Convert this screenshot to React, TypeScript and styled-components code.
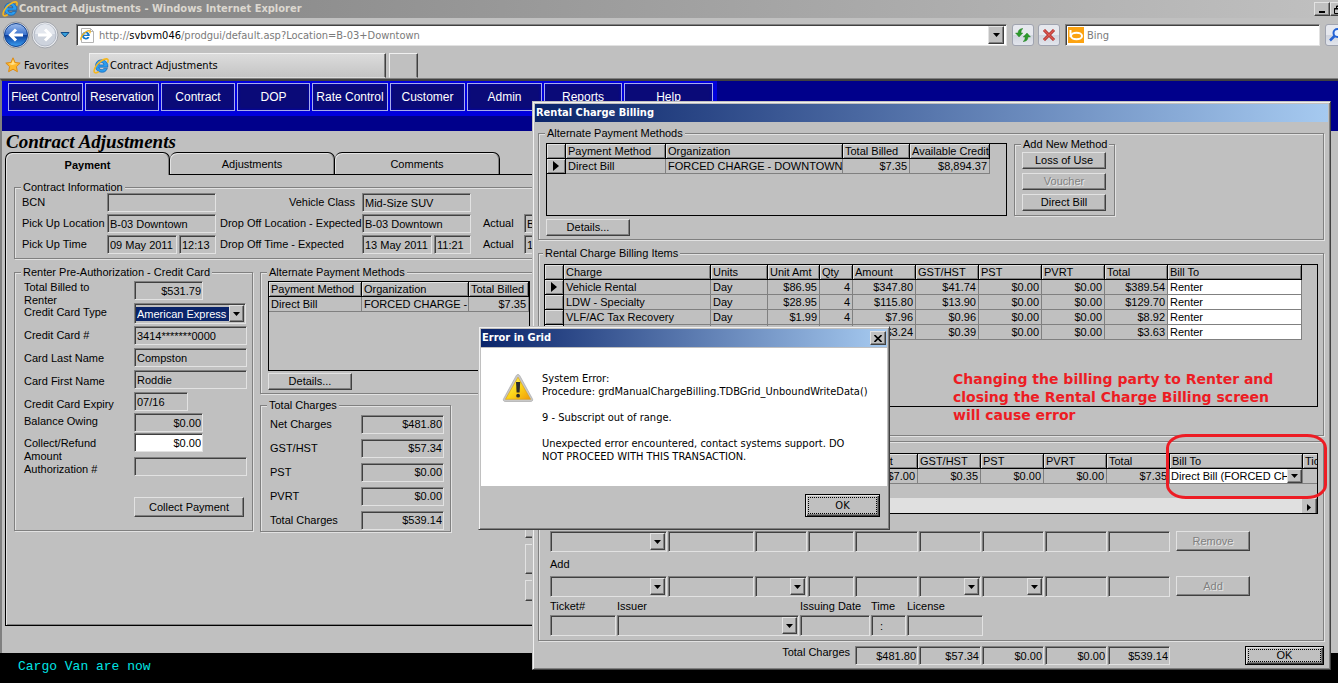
import React from "react";
import styled, { createGlobalStyle, css } from "styled-components";

const FACE = "#c0c0c0";
const LIGHT = "#e2e2e2";
const SHADOW = "#808080";
const DARK = "#404040";
const NAVY = "#00008b";
const SANS = '"Liberation Sans", Arial, sans-serif';
const UI = '"DejaVu Sans Condensed", Tahoma, sans-serif';

const GlobalStyle = createGlobalStyle`
  *, *::before, *::after { box-sizing: border-box; }
  body { margin: 0; background: ${FACE}; }
  button, input, select { font: inherit; color: inherit; margin: 0; border-radius: 0; }
`;

const raised = css`
  background: ${FACE};
  border: 1px solid;
  border-color: ${LIGHT} ${DARK} ${DARK} ${LIGHT};
  box-shadow: inset -1px -1px 0 ${SHADOW};
`;

const sunken = css`
  border: 1px solid;
  border-color: ${SHADOW} ${LIGHT} ${LIGHT} ${SHADOW};
  box-shadow: inset 1px 1px 0 ${DARK};
`;

/* ---------- shell ---------- */

const Screen = styled.div`
  position: relative;
  display: flex;
  flex-direction: column;
  min-height: 100vh;
  overflow: hidden;
  background: ${FACE};
  color: #000;
  font: 11px/13px ${SANS};
`;

const TitleBar = styled.header`
  display: flex;
  align-items: center;
  height: 18px;
  padding-left: 2px;
  gap: 1px;
  background: linear-gradient(90deg, #808080, #c0c0c0);
  color: #dcd8d0;
  font: bold 11px/18px ${UI};
  overflow: hidden;
`;

const TitleText = styled.span`
  flex: 1;
  white-space: nowrap;
`;

const CaptionButton = styled.button`
  ${raised}
  flex: none;
  display: flex;
  align-items: center;
  justify-content: center;
  width: 16px;
  height: 14px;
  padding: 0;
`;

const CaptionGroup = styled.div`
  display: flex;
  flex: none;
  width: 24px;
  overflow: hidden;
`;

const NavBar = styled.div`
  display: flex;
  align-items: center;
  height: 34px;
  padding-left: 3px;
  font-family: ${UI};
  overflow: hidden;
`;

const RoundButtons = styled.div`
  display: flex;
  flex: none;
  align-items: center;
  width: 73px;
`;

const RoundButton = styled.button`
  display: flex;
  flex: none;
  padding: 0;
  border: 0;
  background: none;
`;

const AddressBox = styled.div`
  ${sunken}
  display: flex;
  flex: 1;
  align-items: center;
  min-width: 0;
  height: 22px;
  padding: 1px 2px 1px 3px;
  gap: 4px;
  background: #fff;
`;

const AddressText = styled.a`
  flex: 1;
  color: #7a7a7a;
  text-decoration: none;
  white-space: nowrap;
  b { color: #000; font-weight: normal; }
`;

const ArrowButton = styled.button`
  ${raised}
  display: flex;
  flex: none;
  align-items: center;
  justify-content: center;
  width: 16px;
  height: 18px;
  padding: 0;
`;

const ToolButton = styled.button<{ $gap: number }>`
  display: flex;
  flex: none;
  align-items: center;
  justify-content: center;
  width: 22px;
  height: 22px;
  margin-left: ${(p) => p.$gap}px;
  padding: 0;
  border: 1px solid #a0a4b0;
  border-radius: 3px;
  background: linear-gradient(#e6e8ee 50%, #d0d4de 50%, #e2e5ec);
`;

const SearchBox = styled.label`
  ${sunken}
  display: flex;
  flex: none;
  align-items: center;
  width: 255px;
  height: 22px;
  margin-left: 5px;
  padding: 1px 2px;
  gap: 3px;
  background: #fff;
`;

const SearchInput = styled.input`
  flex: 1;
  min-width: 0;
  padding: 0;
  border: 0;
  outline: 0;
  background: none;
  &::placeholder { color: #7a7a7a; opacity: 1; }
`;

const SearchSlot = styled.div`
  flex: none;
  width: 18px;
  overflow: hidden;
`;

const TabBar = styled.div`
  display: flex;
  align-items: flex-end;
  height: 27px;
  border-bottom: 1px solid ${SHADOW};
  padding-left: 5px;
  font-family: ${UI};
`;

const Favorites = styled.button`
  display: flex;
  align-items: center;
  align-self: flex-start;
  width: 84px;
  height: 26px;
  padding: 0;
  gap: 3px;
  border: 0;
  background: none;
`;

const BrowserTab = styled.div<{ $width: number }>`
  display: flex;
  align-items: center;
  width: ${(p) => p.$width}px;
  height: 25px;
  margin-right: 3px;
  padding-left: 3px;
  gap: 1px;
  border: 1px solid;
  border-color: #f0f0f0 ${DARK} transparent #f0f0f0;
  box-shadow: inset -1px 0 0 ${SHADOW};
  background: ${(p) => (p.$width > 50 ? "linear-gradient(#dcdcdc, #c4c4c4)" : FACE)};
`;

/* ---------- page ---------- */

const Page = styled.main`
  display: flex;
  flex: 1;
  flex-direction: column;
  border: solid ${DARK};
  border-width: 2px 0 0 2px;
  border-left-color: ${SHADOW};
`;

const MenuBand = styled.nav`
  height: 50px;
  background: ${NAVY};
`;

const Menu = styled.div`
  display: inline-flex;
  height: 35px;
  padding: 2px 4px 5px 6px;
  gap: 2px;
  background: #0000dc;
  vertical-align: top;
`;

const MenuItem = styled.button<{ $width: number }>`
  width: ${(p) => p.$width}px;
  height: 28px;
  padding: 0;
  border: 1px solid #a9aeea;
  background: #0a0a78;
  color: #fff;
  font-size: 12px;
  white-space: nowrap;
  box-shadow: inset 0 0 3px #0000c0;
`;

const Heading = styled.h1`
  margin: 0;
  padding-left: 4px;
  font: italic bold 19px/21px "Liberation Serif", "Times New Roman", serif;
`;

const Tabs = styled.div`
  display: flex;
  height: 23px;
  margin: 0 20px 0 3px;
`;

const PageTab = styled.button<{ $active?: boolean }>`
  width: 165px;
  padding: 2px 0 0;
  border: solid #000;
  border-width: 1px 1px ${(p) => (p.$active ? 0 : 1)}px ${(p) => (p.$active ? 1 : 0)}px;
  border-radius: 7px 7px 0 0;
  background: ${FACE};
  box-shadow: inset 1px 1px 0 ${LIGHT}, inset -1px 0 0 ${SHADOW};
  font-weight: ${(p) => (p.$active ? "bold" : "normal")};
`;

const TabFill = styled.div`
  flex: 1;
  border-bottom: 1px solid #000;
`;

const Pane = styled.section`
  display: flex;
  flex: 1;
  flex-direction: column;
  margin: 0 20px 27px 3px;
  padding: 7px 0 0 8px;
  gap: 8px;
  border: solid #000;
  border-width: 0 0 1px 1px;
  box-shadow: inset 1px 0 0 ${LIGHT}, inset 0 -1px 0 ${SHADOW};
`;

const Columns = styled.div<{ $gap?: number }>`
  display: flex;
  align-items: flex-start;
  gap: ${(p) => p.$gap ?? 0}px;
`;

const Stack = styled.div<{ $gap?: number; $top?: number; $left?: number }>`
  display: flex;
  flex-direction: column;
  gap: ${(p) => p.$gap ?? 0}px;
  padding-top: ${(p) => p.$top ?? 0}px;
  margin-left: ${(p) => p.$left ?? 0}px;
`;

const Group = styled.fieldset<{ $pad: string; $width?: number }>`
  flex: none;
  width: ${(p) => (p.$width ? p.$width + "px" : "auto")};
  min-width: 0;
  margin: 0;
  padding: ${(p) => p.$pad};
  border: 1px solid ${SHADOW};
  box-shadow: inset 1px 1px 0 ${LIGHT}, 1px 1px 0 ${LIGHT};
`;

const Legend = styled.legend`
  margin-left: -1px;
  padding: 0 2px;
  background: ${FACE};
  line-height: 11px;
  white-space: nowrap;
`;

const ContractGrid = styled.div`
  display: grid;
  grid-template-columns: 85px 109px 146px 109px 53px 109px;
  row-gap: 2px;
  align-items: center;
  & > :nth-child(6n + 3) { margin-left: 4px; }
  & > :nth-child(6n + 5) { margin-left: 12px; }
`;

const Label = styled.label<{ $end?: boolean }>`
  white-space: nowrap;
  text-align: ${(p) => (p.$end ? "right" : "left")};
  padding-right: ${(p) => (p.$end ? 7 : 0)}px;
`;

const Field = styled.input<{ $w?: number; $right?: boolean; $white?: boolean; $tall?: boolean }>`
  ${sunken}
  width: ${(p) => (p.$w ? p.$w + "px" : "100%")};
  height: ${(p) => (p.$tall ? 21 : 19)}px;
  min-width: 0;
  padding: 0 ${(p) => (p.$right ? 1 : 2)}px;
  background: ${(p) => (p.$white ? "#fff" : FACE)};
  text-align: ${(p) => (p.$right ? "right" : "left")};
`;

const Pair = styled.div`
  display: grid;
  grid-template-columns: 70px 37px;
  gap: 2px;
`;

const Cell = styled.div<{ $h: number }>`
  display: flex;
  align-items: flex-start;
  height: ${(p) => p.$h}px;
`;

const CardLabels = styled.div`
  width: 110px;
  padding-top: 3px;
`;

const CardFields = styled.div`
  padding-top: 3px;
`;

const WrapLabel = styled.label`
  width: 90px;
`;

const PushButton = styled.button<{ $w: number; $h?: number }>`
  ${raised}
  width: ${(p) => p.$w}px;
  height: ${(p) => p.$h ?? 17}px;
  padding: 0;
  line-height: 13px;
  &:disabled {
    color: ${SHADOW};
    text-shadow: 1px 1px 0 #e8e8e8;
  }
`;

const DefaultButton = styled.button<{ $w: number; $h: number }>`
  width: ${(p) => p.$w}px;
  height: ${(p) => p.$h}px;
  padding: 2px;
  border: 1px solid #000;
  background: ${FACE};
  box-shadow: inset 1px 1px 0 ${LIGHT}, inset -1px -1px 0 ${DARK}, inset -2px -2px 0 ${SHADOW};
  span {
    display: flex;
    align-items: center;
    justify-content: center;
    height: 100%;
    border: 1px dotted #000;
  }
`;

const ComboBox = styled.span<{ $w?: number; $h: number; $flat?: boolean }>`
  ${(p) => (p.$flat ? css`background: #fff;` : sunken)}
  display: grid;
  align-items: center;
  width: ${(p) => (p.$w ? p.$w + "px" : "100%")};
  height: ${(p) => p.$h}px;
  padding: ${(p) => (p.$flat ? 0 : 1)}px;
  & > * { grid-area: 1 / 1; }
`;

const ComboSelect = styled.select<{ $selected?: boolean }>`
  appearance: none;
  width: ${(p) => (p.$selected ? "93px" : "100%")};
  height: 14px;
  padding: 0 1px;
  border: 0;
  outline: 0;
  background: ${(p) => (p.$selected ? "#0a246a" : "transparent")};
  color: ${(p) => (p.$selected ? "#fff" : "#000")};
  line-height: 14px;
`;

const ComboArrow = styled.span`
  ${raised}
  display: flex;
  align-items: center;
  justify-content: center;
  justify-self: end;
  width: 15px;
  height: 100%;
  pointer-events: none;
`;

/* ---------- grids ---------- */

const GridBox = styled.div<{ $h: number; $w?: number }>`
  display: flex;
  flex-direction: column;
  width: ${(p) => (p.$w ? p.$w + "px" : "auto")};
  height: ${(p) => p.$h}px;
  border: 1px solid #000;
  overflow: hidden;
`;

const DataTable = styled.table`
  flex: none;
  align-self: flex-start;
  table-layout: fixed;
  width: 0;
  border-collapse: separate;
  border-spacing: 0;
  th, td {
    height: 15px;
    padding: 0 2px;
    overflow: hidden;
    white-space: nowrap;
    line-height: 13px;
    font-weight: normal;
    text-align: left;
  }
  && th { padding-right: 0; }
`;

const Th = styled.th`
  border: solid #000;
  border-width: 0 1px 1px 0;
  box-shadow: inset 1px 1px 0 ${LIGHT}, inset -1px -1px 0 ${SHADOW};
`;

const Td = styled.td<{ $right?: boolean; $white?: boolean }>`
  border: solid ${SHADOW};
  border-width: 0 1px 1px 0;
  background: ${(p) => (p.$white ? "#fff" : FACE)};
  && { text-align: ${(p) => (p.$right ? "right" : "left")}; }
  &&:has(span) { padding: 0; }
`;

const Selector = styled(Th)`
  && { padding: 0 0 0 6px; }
  svg { display: block; }
`;

const ScrollBar = styled.div`
  display: flex;
  justify-content: flex-end;
  height: 15px;
  margin-top: auto;
  background: #e0e0e0;
`;

/* ---------- windows ---------- */

const windowFrame = css`
  position: absolute;
  padding: 2px;
  background: ${FACE};
  border: 1px solid;
  border-color: ${FACE} ${DARK} ${DARK} ${FACE};
  box-shadow: inset 1px 1px 0 #f0f0f0, inset -1px -1px 0 ${SHADOW};
`;

const BillingWindow = styled.section`
  ${windowFrame}
  top: 101px;
  left: 532px;
  right: 7px;
`;

const ErrorWindow = styled.section`
  ${windowFrame}
  top: 326px;
  left: 478px;
  width: 412px;
`;

const WindowTitle = styled.h2`
  display: flex;
  align-items: center;
  justify-content: space-between;
  height: 18px;
  margin: 0;
  padding: 0 1px 0 1px;
  background: linear-gradient(90deg, #0a246a, #a6caf0);
  color: #fff;
  font: bold 11px/18px ${UI};
`;

const BillingBody = styled.div`
  display: flex;
  flex-direction: column;
  padding: 6px 4px 2px 3px;
`;

const BelowGroup = styled.div<{ $gap: number }>`
  padding-top: ${(p) => p.$gap}px;
`;

const EntryRow = styled.div`
  display: grid;
  grid-template-columns: 117px 86px 52px 46px 63px 62px 62px 62px 62px 78px;
  column-gap: 1px;
  padding-left: 6px;
  button { margin-left: 5px; }
`;

const TicketGrid = styled.div`
  display: grid;
  grid-template-columns: 66px 182px 70px 35px 76px;
  column-gap: 1px;
  padding-left: 6px;
`;

const RowCaption = styled.div<{ $h: number }>`
  display: flex;
  align-items: center;
  height: ${(p) => p.$h}px;
  padding-left: 6px;
`;

const TicketLabel = styled.label`
  height: 18px;
  line-height: 18px;
  white-space: nowrap;
`;

const TotalsRow = styled.div`
  display: grid;
  grid-template-columns: 316px 63px 62px 62px 62px 62px 1fr;
  column-gap: 1px;
  padding-top: 5px;
`;

const TotalsLabel = styled.span`
  padding-right: 4px;
  text-align: right;
`;

const PushRight = styled.div`
  display: flex;
  justify-content: flex-end;
`;

const ErrorBody = styled.div`
  display: flex;
  align-items: flex-start;
  height: 138px;
  margin-top: 1px;
  padding: 24px 0 0 21px;
  gap: 8px;
  background: #fff;
  font-family: ${UI};
`;

const ErrorText = styled.div`
  flex: 1;
  p { margin: 0 0 13px; }
`;

const ErrorIcon = styled.div`
  padding-top: 1px;
`;

const ErrorActions = styled.div`
  display: flex;
  justify-content: flex-end;
  padding: 8px 7px 10px;
  font-family: ${UI};
`;

const CloseButton = styled(CaptionButton)`
  width: 16px;
  height: 14px;
`;

const Note = styled.p`
  position: absolute;
  top: 268px;
  right: 37px;
  width: 340px;
  margin: 0;
  color: #ed1c24;
  font: bold 14px/18px "DejaVu Sans", Verdana, sans-serif;
`;

const NoteRing = styled.div`
  position: absolute;
  top: 332px;
  right: 3px;
  width: 161px;
  height: 65px;
  border: 3px solid #ed1c24;
  border-radius: 20px / 14px;
  pointer-events: none;
`;

const Footer = styled.footer`
  min-height: 30px;
  padding-left: 18px;
  background: #000;
  color: #00e5e5;
  font: 13px/28px "Liberation Mono", monospace;
`;

/* ---------- drawings ---------- */

const DownArrow = () => (
  <svg width="7" height="4" viewBox="0 0 7 4" aria-hidden="true">
    <path d="M0 0h7L3.5 4z" />
  </svg>
);

const RightArrow = () => (
  <svg width="6" height="10" viewBox="0 0 6 10" aria-hidden="true">
    <path d="M0 0l6 5-6 5z" />
  </svg>
);

const IELogo = ({ size = 16 }: { size?: number }) => (
  <svg width={size} height={size} viewBox="0 0 16 16" aria-hidden="true">
    <path
      d="M8.400 1.800a6.200 6.200 0 1 0 6 8.600h-3.500a2.700 2.700 0 0 1-5-1.200h8.900a6.200 6.200 0 0 0-6.400-7.400zM5.900 6.900a2.500 2.500 0 0 1 5 0z"
      fill="#2a9df0"
      stroke="#0b55a8"
      strokeWidth=".6"
    />
    <path
      d="M14.600 4.600c.9-2 .6-3.600-1-3.700-2.600-.2-7.600 2.800-10.300 6.700-2 2.900-2.900 6.200-1.500 7 .9.500 2.600.1 4-1"
      fill="none"
      stroke="#f4b721"
      strokeWidth="1.600"
    />
  </svg>
);

const BackIcon = () => (
  <svg width="28" height="28" viewBox="0 0 28 28" aria-hidden="true">
    <defs>
      <linearGradient id="backFill" x1="0" y1="0" x2="0" y2="1">
        <stop offset="0" stopColor="#9dbcec" />
        <stop offset=".48" stopColor="#3d74cf" />
        <stop offset=".52" stopColor="#0d3f9e" />
        <stop offset="1" stopColor="#3ba0f2" />
      </linearGradient>
    </defs>
    <circle cx="13" cy="14" r="13" fill="#e6e9ee" stroke="#8c8f96" />
    <circle cx="13" cy="14" r="11.500" fill="url(#backFill)" stroke="#12408c" />
    <path d="M20 14H8M13 8.500L7.500 14l5.500 5.500" fill="none" stroke="#fff" strokeWidth="3" />
  </svg>
);

const ForwardIcon = () => (
  <svg width="28" height="28" viewBox="0 0 28 28" aria-hidden="true">
    <circle cx="14" cy="14" r="13" fill="#e9ebef" stroke="#a2a5ab" />
    <circle cx="14" cy="14" r="11" fill="#cdd3dd" stroke="#b4bac6" />
    <path d="M4 13a10 10 0 0 1 20 0z" fill="#e2e6ed" />
    <path d="M7 14h12M14 8.500l5.500 5.500-5.500 5.500" fill="none" stroke="#fff" strokeWidth="3" />
  </svg>
);

const Star = () => (
  <svg width="16" height="16" viewBox="0 0 16 16" aria-hidden="true">
    <path
      d="M8 .8l2.100 4.700 5.100.6-3.800 3.500 1 5.100L8 12.200l-4.400 2.500 1-5.100L.8 6.100l5.100-.6z"
      fill="#fdb92c"
      stroke="#dc8a14"
    />
    <path d="M8 2.800l1.400 3.500 2.600.4-5 1.300-3.500-1.300 3.200-.4z" fill="#ffe08a" />
  </svg>
);

const PageIcon = () => (
  <svg width="15" height="17" viewBox="0 0 15 17" aria-hidden="true">
    <path d="M1.500 1.500h9l3 3v11h-12z" fill="#fff" stroke="#b4b4b4" />
    <path d="M10.500 1.500v3h3" fill="none" stroke="#b4b4b4" />
    <svg x="0" y="3" width="11" height="11" viewBox="0 0 16 16">
      <path
        d="M8.400 2.400a5.700 5.700 0 1 0 5.400 7.800h-3.200a2.600 2.600 0 0 1-4.800-1.300h8.400a5.700 5.700 0 0 0-5.800-6.500zM5.900 6.900a2.500 2.500 0 0 1 4.900 0z"
        fill="#1276cc"
      />
      <path d="M14.200 4.600c.9-2 .6-3.400-.8-3.500-2.600-.2-7.400 2.900-10 6.700-2 2.900-2.900 5.800-1.500 6.600" fill="none" stroke="#f4b721" strokeWidth="2" />
    </svg>
  </svg>
);

const RefreshIcon = () => (
  <svg width="16" height="16" viewBox="0 0 16 16" aria-hidden="true">
    <path d="M.5 6L4 10l3.800-4H6c0-2 .6-3.600 2-4.500C5 1.700 3 3 3 6z" fill="#2d9a2d" stroke="#1c7a1c" strokeWidth=".4" />
    <path d="M8.200 10L12 6l3.500 4H13c0 3-2 4.500-5 4.600 1.600-1 2.100-2.600 2.100-4.600z" fill="#2d9a2d" stroke="#1c7a1c" strokeWidth=".4" />
  </svg>
);

const StopIcon = () => (
  <svg width="14" height="14" viewBox="0 0 14 14" aria-hidden="true">
    <path d="M2 2l10 10M12 2L2 12" stroke="#a82424" strokeWidth="3" />
    <path d="M2 2l10 10M12 2L2 12" stroke="#dc5a52" strokeWidth="1.500" />
  </svg>
);

const BingIcon = () => (
  <svg width="16" height="16" viewBox="0 0 16 16" aria-hidden="true">
    <rect width="16" height="16" fill="#fca311" />
    <path d="M2.500 3v7" stroke="#fff" strokeWidth="2" />
    <ellipse cx="8.500" cy="9" rx="5.500" ry="3.200" fill="none" stroke="#fff" strokeWidth="2" />
  </svg>
);

const Magnifier = () => (
  <svg width="16" height="16" viewBox="0 0 16 16" aria-hidden="true">
    <circle cx="9.500" cy="6" r="4" fill="#eaf2ff" stroke="#2463d4" strokeWidth="2" />
    <path d="M6.500 9L2 13.500" stroke="#2463d4" strokeWidth="2.500" />
  </svg>
);

const Warning = () => (
  <svg width="32" height="30" viewBox="0 0 32 30" aria-hidden="true">
    <defs>
      <linearGradient id="warnFill" x1="0" y1="0" x2="1" y2="1">
        <stop offset=".2" stopColor="#fff04a" />
        <stop offset=".55" stopColor="#fcd116" />
        <stop offset="1" stopColor="#ef9a0b" />
      </linearGradient>
    </defs>
    <path d="M16 1.500c.8 0 1.400.4 1.800 1.200l12.600 23c.8 1.500 0 2.800-1.500 2.800H3.100c-1.500 0-2.300-1.300-1.500-2.800l12.600-23c.4-.8 1-1.200 1.800-1.200z" fill="#c8c8c8" stroke="#a0a0a0" strokeWidth=".6" />
    <path d="M16 4.200L28.600 26.300H3.400z" fill="url(#warnFill)" stroke="#d79a10" strokeWidth=".6" />
    <path d="M14 9h4.200l-.6 10.500h-3z" fill="#2b2b2b" />
    <circle cx="16.100" cy="22.700" r="1.900" fill="#2b2b2b" />
  </svg>
);

/* ---------- building blocks ---------- */

interface ComboProps {
  label: string;
  value?: string;
  id?: string;
  w?: number;
  h?: number;
  selected?: boolean;
  flat?: boolean;
}

const Combo = ({ label, value = "", id, w, h = 21, selected, flat }: ComboProps) => (
  <ComboBox $w={w} $h={h} $flat={flat}>
    <ComboSelect id={id} aria-label={label} defaultValue={value} $selected={selected}>
      <option value={value}>{value}</option>
    </ComboSelect>
    <ComboArrow>
      <DownArrow />
    </ComboArrow>
  </ComboBox>
);

interface GridProps {
  columns: { title: string; width: number }[];
  rows: string[][];
  selector?: boolean;
  whiteLast?: boolean;
  current?: boolean;
  renderCell?: (text: string, column: number) => React.ReactNode;
}

const isAmount = (text: string) => /^\$?[\d,.]+$/.test(text);

const Grid = ({ columns, rows, selector, whiteLast, current = true, renderCell }: GridProps) => (
  <DataTable>
    <colgroup>
      {selector && <col style={{ width: 19 }} />}
      {columns.map((c) => (
        <col key={c.title} style={{ width: c.width }} />
      ))}
    </colgroup>
    <thead>
      <tr>
        {selector && <Selector aria-label="Current row" />}
        {columns.map((c) => (
          <Th key={c.title} scope="col">
            {c.title}
          </Th>
        ))}
      </tr>
    </thead>
    <tbody>
      {rows.map((row, r) => (
        <tr key={r}>
          {selector && <Selector as="td">{current && r === 0 && <RightArrow />}</Selector>}
          {row.map((text, c) => (
            <Td key={c} $right={isAmount(text)} $white={whiteLast && c === row.length - 1}>
              {renderCell ? renderCell(text, c) : text}
            </Td>
          ))}
        </tr>
      ))}
    </tbody>
  </DataTable>
);

/* ---------- data ---------- */

const menu = [
  ["Fleet Control", 75],
  ["Reservation", 74],
  ["Contract", 74],
  ["DOP", 73],
  ["Rate Control", 76],
  ["Customer", 75],
  ["Admin", 75],
  ["Reports", 78],
  ["Help", 89],
] as const;

const cardLabels = [
  { id: "billed", text: "Total Billed to Renter", h: 25 },
  { id: "type", text: "Credit Card Type", h: 23 },
  { id: "number", text: "Credit Card #", h: 23 },
  { id: "last", text: "Card Last Name", h: 23 },
  { id: "first", text: "Card First Name", h: 23 },
  { id: "expiry", text: "Credit Card Expiry", h: 17 },
  { id: "balance", text: "Balance Owing", h: 22 },
  { id: "collect", text: "Collect/Refund Amount", h: 26 },
  { id: "auth", text: "Authorization #", h: 13 },
];

const cardFields = [
  { id: "billed", value: "$531.79", w: 69, h: 22, right: true },
  { id: "type", value: "American Express", w: 112, h: 23 },
  { id: "number", value: "3414*******0000", w: 113, h: 22 },
  { id: "last", value: "Compston", w: 113, h: 22 },
  { id: "first", value: "Roddie", w: 113, h: 22 },
  { id: "expiry", value: "07/16", w: 54, h: 21 },
  { id: "balance", value: "$0.00", w: 69, h: 20, right: true },
  { id: "collect", value: "$0.00", w: 69, h: 24, right: true, white: true },
  { id: "auth", value: "", w: 113, h: 40 },
];

const totals = [
  ["Net Charges", "$481.80"],
  ["GST/HST", "$57.34"],
  ["PST", "$0.00"],
  ["PVRT", "$0.00"],
  ["Total Charges", "$539.14"],
];

const chargeColumns = (amount: number, billTo: number) => [
  { title: "Charge", width: 147 },
  { title: "Units", width: 57 },
  { title: "Unit Amt", width: 52 },
  { title: "Qty", width: 33 },
  { title: "Amount", width: amount },
  { title: "GST/HST", width: 63 },
  { title: "PST", width: 63 },
  { title: "PVRT", width: 63 },
  { title: "Total", width: 63 },
  { title: "Bill To", width: billTo },
];

const charges = [
  ["Vehicle Rental", "Day", "$86.95", "4", "$347.80", "$41.74", "$0.00", "$0.00", "$389.54", "Renter"],
  ["LDW - Specialty", "Day", "$28.95", "4", "$115.80", "$13.90", "$0.00", "$0.00", "$129.70", "Renter"],
  ["VLF/AC Tax Recovery", "Day", "$1.99", "4", "$7.96", "$0.96", "$0.00", "$0.00", "$8.92", "Renter"],
  ["", "", "", "", "$3.24", "$0.39", "$0.00", "$0.00", "$3.63", "Renter"],
];

const manualCharges = [["", "", "", "", "$7.00", "$0.35", "$0.00", "$0.00", "$7.35", "Direct Bill (FORCED CH.", ""]];

const entryFields = ["Charge", "Description", "Units", "Quantity", "Amount", "GST/HST", "PST", "PVRT", "Total"];

/* ---------- sections ---------- */

const BrowserChrome = () => (
  <>
    <TitleBar>
      <IELogo />
      <TitleText>Contract Adjustments - Windows Internet Explorer</TitleText>
      <CaptionGroup>
        <CaptionButton aria-label="Minimize">
          <svg width="8" height="8" viewBox="0 0 8 8" aria-hidden="true">
            <path d="M1 6h6v2H1z" />
          </svg>
        </CaptionButton>
        <CaptionButton aria-label="Restore">
          <svg width="9" height="9" viewBox="0 0 9 9" aria-hidden="true">
            <path d="M2.500 3V1h6v4.500H6M.5 3.500h5v5h-5zM0 4h6M2 1.500h7" fill="none" stroke="#000" />
          </svg>
        </CaptionButton>
      </CaptionGroup>
    </TitleBar>
    <NavBar>
      <RoundButtons>
        <RoundButton aria-label="Back">
          <BackIcon />
        </RoundButton>
        <RoundButton aria-label="Forward">
          <ForwardIcon />
        </RoundButton>
        <RoundButton aria-label="Recent pages">
          <svg width="16" height="8" viewBox="0 0 16 8" aria-hidden="true">
            <path d="M2 1.500h8L6 6z" fill="#35a0dc" stroke="#124a86" />
          </svg>
        </RoundButton>
      </RoundButtons>
      <AddressBox>
        <PageIcon />
        <AddressText href="#">
          http://<b>svbvm046</b>/prodgui/default.asp?Location=B-03+Downtown
        </AddressText>
        <ArrowButton aria-label="Show addresses">
          <DownArrow />
        </ArrowButton>
      </AddressBox>
      <ToolButton $gap={5} aria-label="Refresh">
        <RefreshIcon />
      </ToolButton>
      <ToolButton $gap={4} aria-label="Stop">
        <StopIcon />
      </ToolButton>
      <SearchBox>
        <BingIcon />
        <SearchInput placeholder="Bing" aria-label="Search" />
      </SearchBox>
      <SearchSlot>
        <ToolButton $gap={5} aria-label="Go">
          <Magnifier />
        </ToolButton>
      </SearchSlot>
    </NavBar>
    <TabBar>
      <Favorites>
        <Star />
        Favorites
      </Favorites>
      <BrowserTab $width={297}>
        <IELogo />
        Contract Adjustments
      </BrowserTab>
      <BrowserTab $width={29} />
    </TabBar>
  </>
);

const ContractInfo = () => (
  <Group $pad="0 0 4px 7px">
    <Legend>Contract Information</Legend>
    <ContractGrid>
      <Label htmlFor="bcn">BCN</Label>
      <Field id="bcn" readOnly value="" />
      <Label htmlFor="class" $end>
        Vehicle Class
      </Label>
      <Field id="class" readOnly value="Mid-Size SUV" />
      <span />
      <span />
      <Label htmlFor="pickLoc">Pick Up Location</Label>
      <Field id="pickLoc" readOnly value="B-03 Downtown" />
      <Label htmlFor="dropLoc">Drop Off Location - Expected</Label>
      <Field id="dropLoc" readOnly value="B-03 Downtown" />
      <Label htmlFor="actLoc">Actual</Label>
      <Field id="actLoc" readOnly value="B-03 Downtown" />
      <Label htmlFor="pickDate">Pick Up Time</Label>
      <Pair>
        <Field id="pickDate" readOnly value="09 May 2011" />
        <Field aria-label="Pick up hour" readOnly value="12:13" />
      </Pair>
      <Label htmlFor="dropDate">Drop Off Time - Expected</Label>
      <Pair>
        <Field id="dropDate" readOnly value="13 May 2011" />
        <Field aria-label="Drop off hour" readOnly value="11:21" />
      </Pair>
      <Label htmlFor="actDate">Actual</Label>
      <Field id="actDate" readOnly value="13 May 2011" />
    </ContractGrid>
  </Group>
);

const CardGroup = () => (
  <Group $pad="0 0 13px 7px" $width={239}>
    <Legend>Renter Pre-Authorization - Credit Card</Legend>
    <Columns>
      <Stack $left={2}>
        <CardLabels>
          {cardLabels.map((l) => (
            <Cell key={l.id} $h={l.h}>
              <WrapLabel htmlFor={l.id}>{l.text}</WrapLabel>
            </Cell>
          ))}
        </CardLabels>
      </Stack>
      <CardFields>
        {cardFields.map((f) => (
          <Cell key={f.id} $h={f.h}>
            {f.id === "type" ? (
              <Combo id={f.id} label="Credit Card Type" value={f.value} w={f.w} selected />
            ) : (
              <Field id={f.id} $w={f.w} $right={f.right} $white={f.white} readOnly={!f.white} defaultValue={f.value} />
            )}
          </Cell>
        ))}
        <PushButton $w={110} $h={20}>
          Collect Payment
        </PushButton>
      </CardFields>
    </Columns>
  </Group>
);

const TotalsList = styled.div`
  display: grid;
  row-gap: 5px;
`;

const TotalsLine = styled.div`
  display: grid;
  grid-template-columns: 91px 83px;
  padding-left: 2px;
  line-height: 19px;
`;

const TotalsGroup = () => (
  <Group $pad="4px 0 1px 7px" $width={191}>
    <Legend>Total Charges</Legend>
    <TotalsList>
      {totals.map(([text, value]) => (
        <TotalsLine key={text}>
          <Label htmlFor={text}>{text}</Label>
          <Field id={text} $right readOnly value={value} />
        </TotalsLine>
      ))}
    </TotalsList>
  </Group>
);

const AdjustmentsPage = () => (
  <Page>
    <MenuBand>
      <Menu>
        {menu.map(([text, width]) => (
          <MenuItem key={text} $width={width}>
            {text}
          </MenuItem>
        ))}
      </Menu>
    </MenuBand>
    <Heading>Contract Adjustments</Heading>
    <Tabs>
      <PageTab $active>Payment</PageTab>
      <PageTab>Adjustments</PageTab>
      <PageTab>Comments</PageTab>
      <TabFill />
    </Tabs>
    <Pane>
      <ContractInfo />
      <Columns $gap={7}>
        <CardGroup />
        <Stack $gap={6}>
          <Group $pad="3px 0 3px 7px">
            <Legend>Alternate Payment Methods</Legend>
            <Stack $gap={2}>
              <GridBox $h={90} $w={262}>
                <Grid
                  columns={[
                    { title: "Payment Method", width: 93 },
                    { title: "Organization", width: 107 },
                    { title: "Total Billed", width: 60 },
                  ]}
                  rows={[["Direct Bill", "FORCED CHARGE -", "$7.35"]]}
                />
              </GridBox>
              <PushButton $w={84}>Details...</PushButton>
            </Stack>
          </Group>
          <Columns $gap={74}>
            <TotalsGroup />
            <Stack $top={117} $gap={6}>
              <PushButton $w={84} $h={21} aria-label="Receipt" />
              <PushButton $w={84} $h={30} aria-label="Apply" />
              <PushButton $w={84} $h={21} aria-label="Exit" />
            </Stack>
          </Columns>
        </Stack>
      </Columns>
    </Pane>
  </Page>
);

const Billing = () => (
  <BillingWindow role="dialog" aria-label="Rental Charge Billing">
    <WindowTitle>Rental Charge Billing</WindowTitle>
    <BillingBody>
      <Group $pad="0 0 3px 7px">
        <Legend>Alternate Payment Methods</Legend>
        <Columns $gap={7}>
          <Stack $gap={3} $top={4}>
            <GridBox $h={73} $w={461}>
              <Grid
                selector
                columns={[
                  { title: "Payment Method", width: 100 },
                  { title: "Organization", width: 177 },
                  { title: "Total Billed", width: 67 },
                  { title: "Available Credit", width: 80 },
                ]}
                rows={[["Direct Bill", "FORCED CHARGE - DOWNTOWN", "$7.35", "$8,894.37"]]}
              />
            </GridBox>
            <PushButton $w={84}>Details...</PushButton>
          </Stack>
          <Group $pad="2px 0 4px 7px" $width={101}>
            <Legend>Add New Method</Legend>
            <Stack $gap={4}>
              <PushButton $w={84}>Loss of Use</PushButton>
              <PushButton $w={84} disabled>
                Voucher
              </PushButton>
              <PushButton $w={84}>Direct Bill</PushButton>
            </Stack>
          </Group>
        </Columns>
      </Group>
      <BelowGroup $gap={8}>
        <Group $pad="5px 5px 28px 5px">
          <Legend>Rental Charge Billing Items</Legend>
          <GridBox $h={143}>
            <Grid selector whiteLast columns={chargeColumns(63, 134)} rows={charges} />
          </GridBox>
        </Group>
      </BelowGroup>
      <BelowGroup $gap={5}>
        <Group $pad="11px 5px 4px 5px" aria-label="Manual charges">
          <GridBox $h={61}>
            <Grid
              selector
              current={false}
              columns={[...chargeColumns(65, 133), { title: "Ticket#", width: 40 }]}
              rows={manualCharges}
              renderCell={(text, column) => (column === 9 ? <Combo label="Bill To" value={text} h={14} flat /> : text)}
            />
            <ScrollBar>
              <ArrowButton as="span">
                <svg width="4" height="7" viewBox="0 0 4 7" aria-hidden="true">
                  <path d="M0 0l4 3.500L0 7z" />
                </svg>
              </ArrowButton>
            </ScrollBar>
          </GridBox>
          <BelowGroup $gap={17}>
            <EntryRow>
              {entryFields.map((name, i) =>
                i === 0 ? <Combo key={name} label={name} /> : <Field key={name} aria-label={name} $tall readOnly />
              )}
              <PushButton $w={74} $h={20} disabled>
                Remove
              </PushButton>
            </EntryRow>
          </BelowGroup>
          <RowCaption $h={24}>Add</RowCaption>
          <EntryRow>
            {entryFields.map((name, i) =>
              [0, 2, 5, 6].includes(i) ? (
                <Combo key={name} label={"New " + name} />
              ) : (
                <Field key={name} aria-label={"New " + name} $tall />
              )
            )}
            <PushButton $w={74} $h={20} disabled>
              Add
            </PushButton>
          </EntryRow>
          <TicketGrid>
            <TicketLabel htmlFor="ticket">Ticket#</TicketLabel>
            <TicketLabel htmlFor="issuer">Issuer</TicketLabel>
            <TicketLabel htmlFor="issued">Issuing Date</TicketLabel>
            <TicketLabel htmlFor="time">Time</TicketLabel>
            <TicketLabel htmlFor="license">License</TicketLabel>
            <Field id="ticket" $tall />
            <Combo id="issuer" label="Issuer" />
            <Field id="issued" $tall />
            <Field id="time" $tall defaultValue="  :" />
            <Field id="license" $tall />
          </TicketGrid>
        </Group>
      </BelowGroup>
      <TotalsRow>
        <TotalsLabel>Total Charges</TotalsLabel>
        {totals.map(([text, value]) => (
          <Field key={text} aria-label={text} $right readOnly value={value} />
        ))}
        <PushRight>
          <DefaultButton $w={79} $h={19}>
            <span>OK</span>
          </DefaultButton>
        </PushRight>
      </TotalsRow>
    </BillingBody>
    <Note>
      Changing the billing party to Renter and closing the Rental Charge Billing screen will cause error
    </Note>
    <NoteRing />
  </BillingWindow>
);

const GridError = () => (
  <ErrorWindow role="alertdialog" aria-label="Error in Grid">
    <WindowTitle>
      Error in Grid
      <CloseButton aria-label="Close">
        <svg width="8" height="7" viewBox="0 0 8 7" aria-hidden="true">
          <path d="M.5 0l7 7M7.500 0l-7 7" stroke="#000" strokeWidth="1.600" />
        </svg>
      </CloseButton>
    </WindowTitle>
    <ErrorBody>
      <ErrorIcon>
        <Warning />
      </ErrorIcon>
      <ErrorText>
        <p>
          System Error:
          <br />
          Procedure: grdManualChargeBilling.TDBGrid_UnboundWriteData()
        </p>
        <p>9 - Subscript out of range.</p>
        <p>
          Unexpected error encountered, contact systems support. DO
          <br />
          NOT PROCEED WITH THIS TRANSACTION.
        </p>
      </ErrorText>
    </ErrorBody>
    <ErrorActions>
      <DefaultButton $w={75} $h={23}>
        <span>OK</span>
      </DefaultButton>
    </ErrorActions>
  </ErrorWindow>
);

export default function App() {
  return (
    <>
      <GlobalStyle />
      <Screen>
        <BrowserChrome />
        <AdjustmentsPage />
        <Footer>Cargo Van are now</Footer>
        <Billing />
        <GridError />
      </Screen>
    </>
  );
}
